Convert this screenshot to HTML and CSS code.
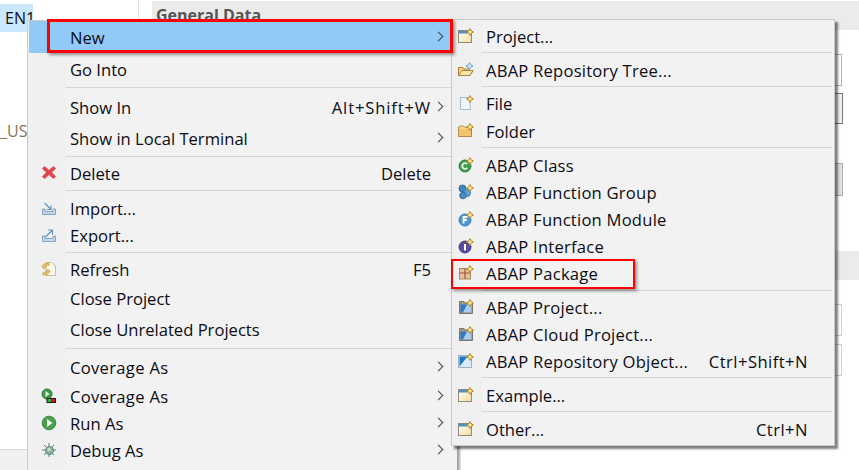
FILE: index.html
```html
<!DOCTYPE html>
<html lang="en">
<head>
    <meta charset="UTF-8">
    <meta name="viewport" content="width=device-width, initial-scale=1.0">
    <title>New ABAP Package</title>
    <link rel="stylesheet" href="styles.css">
</head>
<body>
    <!-- icon parts used more than once -->
    <svg class="defs" aria-hidden="true">
        <defs>
            <linearGradient id="cream" x1="0" y1="0" x2="1" y2="1">
                <stop offset="0" stop-color="#fff"/>
                <stop offset="1" stop-color="#f3dc9c"/>
            </linearGradient>
            <symbol id="star" viewBox="0 0 16 16">
                <path d="M12 0.500 L13.200 2.800 L15.500 4 L13.200 5.200 L12 7.500 L10.800 5.200 L8.500 4 L10.800 2.800 Z" fill="#fbe88c" stroke="#b8892e" stroke-width="1"/>
            </symbol>
            <symbol id="wizard" viewBox="0 0 16 16">
                <rect x="0.500" y="2.500" width="13" height="12" fill="url(#cream)" stroke="#8f8a78"/>
                <rect x="1" y="3" width="12" height="2.500" fill="#4d90c8"/>
            </symbol>
            <symbol id="abap-project" viewBox="0 0 16 16">
                <path d="M1.500 2.500 L6 2.500 L7 4 L14.500 4 L14.500 14.500 L1.500 14.500 Z" fill="#a59a86" stroke="#7f7566"/>
                <rect x="2.500" y="5.500" width="11" height="8" fill="#2f7bc4"/>
                <path d="M9 5.500 L13.500 5.500 L13.500 13.500 L5 13.500 Z" fill="#a9cdee"/>
            </symbol>
        </defs>
    </svg>

    <div class="workbench">
        <aside class="tree">
            <div class="tree-selected">EN1</div>
            <div class="tree-label">_US</div>
            <div class="tree-foot"></div>
        </aside>
        <main class="editor">
            <div class="section-band">General Data</div>
            <div class="field field-a"></div>
            <div class="field field-b"></div>
            <div class="field field-c"></div>
            <div class="section-band band-two"></div>
            <div class="field field-d"></div>
            <div class="field field-e"></div>
        </main>
    </div>

    <div class="menu menu-main">
        <div class="item active"><span class="label">New</span><span class="arrow"></span></div>
        <div class="item after-active"><span class="label">Go Into</span></div>
        <div class="sep"></div>
        <div class="item"><span class="label">Show In</span><span class="keys keys-wide">Alt+Shift+W</span><span class="arrow"></span></div>
        <div class="item"><span class="label">Show in Local Terminal</span><span class="arrow"></span></div>
        <div class="sep"></div>
        <div class="item">
            <svg class="icon" viewBox="0 0 16 16"><path d="M3.500 1 L8 5 L12.500 1 L15 3.500 L11 7.500 L15 11.500 L12.500 14 L8 10 L3.500 14 L1 11.500 L5 7.500 L1 3.500 Z" fill="#e0474c"/></svg>
            <span class="label">Delete</span><span class="keys">Delete</span>
        </div>
        <div class="sep"></div>
        <div class="item">
            <svg class="icon" viewBox="0 0 16 16"><path d="M1.500 9 L1.500 14.500 L14.500 14.500 L14.500 9 L12 9 L12 11.500 L4 11.500 L4 9 Z" fill="#c3d6ea" stroke="#87a3c4"/><path d="M3.500 3 L9.500 9 M6 9.500 L10 9.500 L10 5.500" fill="none" stroke="#5d93bd" stroke-width="1.200"/></svg>
            <span class="label">Import...</span>
        </div>
        <div class="item">
            <svg class="icon" viewBox="0 0 16 16"><path d="M1.500 9 L1.500 14.500 L14.500 14.500 L14.500 9 L12 9 L12 11.500 L4 11.500 L4 9 Z" fill="#c3d6ea" stroke="#87a3c4"/><path d="M4.500 10 L11 3.500 M7 3 L11.500 3 L11.500 7.500" fill="none" stroke="#5d93bd" stroke-width="1.200"/></svg>
            <span class="label">Export...</span>
        </div>
        <div class="sep"></div>
        <div class="item">
            <svg class="icon" viewBox="0 0 16 16"><path d="M5 1.500 L11 1.500 L14.500 5 L14.500 14.500 L5 14.500 Z" fill="#fbf8ec" stroke="#c8bd98"/><path d="M8 2.500 A4 3 0 0 0 2 5 L0.800 5 L3 8 L5.500 5 L4.200 5 A2.500 1.500 0 0 1 8 4.500 Z M2 13.500 A4 3 0 0 0 8 11 L9.200 11 L7 8 L4.500 11 L5.800 11 A2.500 1.500 0 0 1 2 11.500 Z" fill="#efc65c" stroke="#b98f33" stroke-width="0.600"/></svg>
            <span class="label">Refresh</span><span class="keys">F5</span>
        </div>
        <div class="item"><span class="label">Close Project</span></div>
        <div class="item"><span class="label">Close Unrelated Projects</span></div>
        <div class="sep"></div>
        <div class="item"><span class="label coverage">Coverage As</span><span class="arrow"></span></div>
        <div class="item">
            <svg class="icon" viewBox="0 0 16 16"><circle cx="6" cy="6" r="5" fill="#3f9b46" stroke="#2d7a36"/><path d="M4.500 3 L8.500 6 L4.500 9 Z" fill="#f2f8ee"/><rect x="5.500" y="10" width="9.500" height="5" fill="#1a1a1a"/><rect x="6.500" y="11" width="3.500" height="3" fill="#24b83c"/><rect x="10" y="11" width="4" height="3" fill="#d4141c"/></svg>
            <span class="label coverage">Coverage As</span><span class="arrow"></span>
        </div>
        <div class="item">
            <svg class="icon" viewBox="0 0 16 16"><circle cx="8" cy="8" r="6.800" fill="#4aa04e" stroke="#3a8a42"/><path d="M6 4 L11.500 8 L6 12 Z" fill="#f4f9ee"/></svg>
            <span class="label">Run As</span><span class="arrow"></span>
        </div>
        <div class="item">
            <svg class="icon" viewBox="0 0 16 16"><path d="M8 1 L8 15 M1 8 L15 8 M3 3 L13 13 M13 3 L3 13" stroke="#4f7f78" stroke-width="1"/><circle cx="8.500" cy="8.500" r="4" fill="#8fb3a0" stroke="#5a8a80"/><circle cx="8" cy="7.500" r="1.600" fill="#d7e6c8"/></svg>
            <span class="label">Debug As</span><span class="arrow"></span>
        </div>
    </div>

    <div class="menu menu-sub">
        <div class="item">
            <svg class="icon" viewBox="0 0 16 16"><use href="#wizard"/><use href="#star"/></svg>
            <span class="label">Project...</span>
        </div>
        <div class="sep"></div>
        <div class="item">
            <svg class="icon" viewBox="0 0 16 16"><path d="M0.500 13.500 L0.500 5.500 L5 5.500 L6 7 L11 7 L11 8.500 L15 8.500 L12 13.500 Z" fill="#f4d284" stroke="#b3813a"/><path d="M0.500 13.500 L4 8.500 L15 8.500 L12 13.500 Z" fill="#fbe6ae" stroke="#b3813a"/><path d="M11.500 0.500 L12.700 2.800 L15 4 L12.700 5.200 L11.500 7.500 L10.300 5.200 L8 4 L10.300 2.800 Z" fill="#d5ecfa" stroke="#6aa3cf"/></svg>
            <span class="label wide">ABAP Repository Tree...</span>
        </div>
        <div class="sep"></div>
        <div class="item">
            <svg class="icon" viewBox="0 0 16 16"><path d="M2.500 2.500 L11.500 2.500 L12.500 14.500 L2.500 14.500 Z" fill="#f2f6fb" stroke="#a8b8c8"/><use href="#star"/></svg>
            <span class="label">File</span>
        </div>
        <div class="item">
            <svg class="icon" viewBox="0 0 16 16"><path d="M0.500 4 L4.500 2.500 L6 4 L13.500 4 L13.500 13.500 L0.500 13.500 Z" fill="#f6d68d" stroke="#b68a42"/><path d="M1 6 L13 6 L13 13 L1 13 Z" fill="#f1c56f"/><use href="#star"/></svg>
            <span class="label">Folder</span>
        </div>
        <div class="sep"></div>
        <div class="item">
            <svg class="icon" viewBox="0 0 16 16"><circle cx="7" cy="9" r="6" fill="#3f9a4c" stroke="#2f7f3c"/><path d="M9.200 7.200 A2.800 2.800 0 1 0 9.200 10.800" fill="none" stroke="#eef6e6" stroke-width="1.800"/><use href="#star"/></svg>
            <span class="label wide">ABAP Class</span>
        </div>
        <div class="item">
            <svg class="icon" viewBox="0 0 16 16"><circle cx="4.500" cy="4.500" r="3.500" fill="#3f86bd" stroke="#2f6d9f"/><circle cx="9" cy="9" r="3.500" fill="#65a3d0" stroke="#3f7fae"/><circle cx="5" cy="11.500" r="3.300" fill="#4b8fc2" stroke="#2f6d9f"/><use href="#star"/></svg>
            <span class="label wide">ABAP Function Group</span>
        </div>
        <div class="item">
            <svg class="icon" viewBox="0 0 16 16"><circle cx="7" cy="9" r="6" fill="#4d97d6" stroke="#3a7db6"/><path d="M5.500 12.500 L5.500 6 L9.500 6 M5.500 9 L8.800 9" fill="none" stroke="#fff" stroke-width="1.800"/><use href="#star"/></svg>
            <span class="label wide">ABAP Function Module</span>
        </div>
        <div class="item">
            <svg class="icon" viewBox="0 0 16 16"><circle cx="7" cy="9" r="6" fill="#5b4a9e" stroke="#473982"/><path d="M7 6 L7 12.500" stroke="#fff" stroke-width="2"/><use href="#star"/></svg>
            <span class="label wide">ABAP Interface</span>
        </div>
        <div class="item">
            <svg class="icon" viewBox="0 0 16 16"><rect x="1.500" y="3.500" width="11" height="10.500" fill="#e6c09a" stroke="#a98a66"/><path d="M1.500 8 L12.500 8 M7 3.500 L7 14" stroke="#9e5a3a" stroke-width="1.200"/><use href="#star"/></svg>
            <span class="label wide">ABAP Package</span>
        </div>
        <div class="sep"></div>
        <div class="item">
            <svg class="icon" viewBox="0 0 16 16"><use href="#abap-project"/><use href="#star"/></svg>
            <span class="label wide">ABAP Project...</span>
        </div>
        <div class="item">
            <svg class="icon" viewBox="0 0 16 16"><use href="#abap-project"/><use href="#star"/></svg>
            <span class="label wide">ABAP Cloud Project...</span>
        </div>
        <div class="item">
            <svg class="icon" viewBox="0 0 16 16"><rect x="0.500" y="2.500" width="13" height="12" fill="#dce9f6" stroke="#9ab0c8"/><path d="M1.500 3.500 L9.500 3.500 L1.500 13.500 Z" fill="#1f76c8"/><use href="#star"/></svg>
            <span class="label wide">ABAP Repository Object...</span><span class="keys keys-ctrl">Ctrl+Shift+N</span>
        </div>
        <div class="sep"></div>
        <div class="item">
            <svg class="icon" viewBox="0 0 16 16"><use href="#wizard"/><use href="#star"/></svg>
            <span class="label">Example...</span>
        </div>
        <div class="sep"></div>
        <div class="item">
            <svg class="icon" viewBox="0 0 16 16"><use href="#wizard"/><use href="#star"/></svg>
            <span class="label">Other...</span><span class="keys keys-ctrl">Ctrl+N</span>
        </div>
    </div>

    <!-- red callouts drawn over the menus -->
    <div class="callout callout-new"></div>
    <div class="callout callout-package"></div>
</body>
</html>
```

FILE: styles.css
```css
html, body {
    margin: 0;
    padding: 0;
    height: 100%;
}

body {
    position: relative;
    width: 859px;
    height: 470px;
    overflow: hidden;
    background: #fff;
    font-family: "Open Sans", "Noto Sans", Arial, sans-serif;
    font-size: 16.6px;
    color: #0c0c14;
}

.defs {
    position: absolute;
    width: 0;
    height: 0;
}

/* workbench behind the menus */
.workbench {
    display: flex;
    height: 470px;
}

.tree {
    position: relative;
    width: 139px;
    border-right: 1px solid #e4e4e4;
    box-sizing: border-box;
}

.tree-selected {
    margin-top: 4px;
    width: 33px;
    height: 28px;
    line-height: 28px;
    padding-left: 5px;
    box-sizing: border-box;
    background: #cce8ff;
    font-size: 16px;
    white-space: nowrap;
}

.tree-label {
    margin-top: 84px;
    line-height: 30px;
    font-size: 16px;
    color: #8a7550;
}

.tree-foot {
    position: absolute;
    left: 0;
    right: 0;
    bottom: 0;
    height: 20px;
    background: #f0f0f0;
    border-top: 1px solid #d9d9d9;
}

.editor {
    flex: 1;
    padding: 1px 0 0 13px;
    display: flex;
    flex-direction: column;
}

.section-band {
    height: 29px;
    padding-left: 4px;
    background: #ebebeb;
    font-weight: 700;
    color: #555;
    font-size: 16px;
    line-height: 29px;
}

.field {
    box-sizing: border-box;
    width: 690px;
    border: 1px solid #b5b5b5;
}

.field-a { margin-top: 24px; height: 32px; }
.field-b { margin-top: 7px; height: 31px; width: 691px; border-color: #7a7a7a; background: #f0f0f0; }
.field-c { margin-top: 39px; height: 33px; width: 691px; background: #e1e1e1; border-color: #adadad; }
.band-two { margin-top: 55px; }
.field-d { margin-top: 24px; height: 32px; border-color: #d0d0d0; }
.field-e { margin-top: 8px; height: 32px; border-color: #d0d0d0; }

/* context menus: each row track runs from where its text starts to where the next row starts */
.menu {
    position: absolute;
    box-sizing: border-box;
    display: grid;
    align-content: start;
    border: 1px solid #cbcbcb;
    background: linear-gradient(to right, #f0f0f0 var(--sep-x), #f2f2f2 var(--sep-x));
}

.menu-main {
    left: 27px;
    top: 20px;
    width: 431px;
    height: 460px;
    border-right-color: #a0a0a0;
    box-shadow: 2px 2px 2px rgba(0, 0, 0, 0.35);
    grid-template-rows: 32px 34px 10px 31px 28px 7px 27px 8px 27px 27px 7px 29px 31px 29px 9px 29px 27px 27px 27px;
    --text-x: 42px;
    --icon-x: 13px;
    --sep-x: 38px;
    --keys-right: 26px;
}

.menu-sub {
    left: 451px;
    top: 19px;
    width: 384px;
    height: 427px;
    padding-top: 6px;
    box-shadow: 3px 3px 2px rgba(0, 0, 0, 0.5);
    grid-template-rows: 26px 8px 26px 7px 28px 26px 8px 27px 27px 27px 27px 27px 7px 27px 27px 26px 8px 26px 8px 25px;
    --text-x: 34px;
    --icon-x: 6px;
    --sep-x: 30px;
    --keys-right: 26px;
}

.item {
    display: flex;
    align-items: flex-start;
    position: relative;
    padding-left: var(--text-x);
    padding-right: var(--keys-right);
    line-height: 22px;
    white-space: nowrap;
}

.item.active {
    margin-left: 1px;
    padding-left: calc(var(--text-x) - 1px);
    padding-top: 6px;
    background: #91c9f7;
}

.item.after-active {
    padding-top: 6px;
}

.label {
    flex: 1;
}

.label.wide {
    letter-spacing: 0.22px;
}

.label.coverage {
    letter-spacing: 0.3px;
}

.keys-ctrl {
    letter-spacing: 0.45px;
}

.keys-wide {
    letter-spacing: 0.85px;
}

.arrow {
    position: absolute;
    right: 15px;
    top: 6px;
    width: 6px;
    height: 6px;
    border-top: 1.5px solid #444;
    border-right: 1.5px solid #444;
    transform: rotate(45deg);
}

.active .arrow {
    top: 12px;
}

.icon {
    position: absolute;
    left: var(--icon-x);
    top: 2px;
    width: 16px;
    height: 16px;
}

.sep {
    align-self: start;
    height: 1px;
    margin-left: var(--sep-x);
    margin-right: 2px;
    background: #d5d5d5;
}

.callout {
    position: absolute;
    box-sizing: border-box;
    border: 2px solid #f00;
    box-shadow: 2px 2px 3px rgba(0, 0, 0, 0.4);
}

.callout-new {
    left: 47px;
    top: 19px;
    width: 406px;
    height: 34px;
    border-width: 3px;
}

.callout-package {
    left: 451px;
    top: 259px;
    width: 184px;
    height: 30px;
}
```
